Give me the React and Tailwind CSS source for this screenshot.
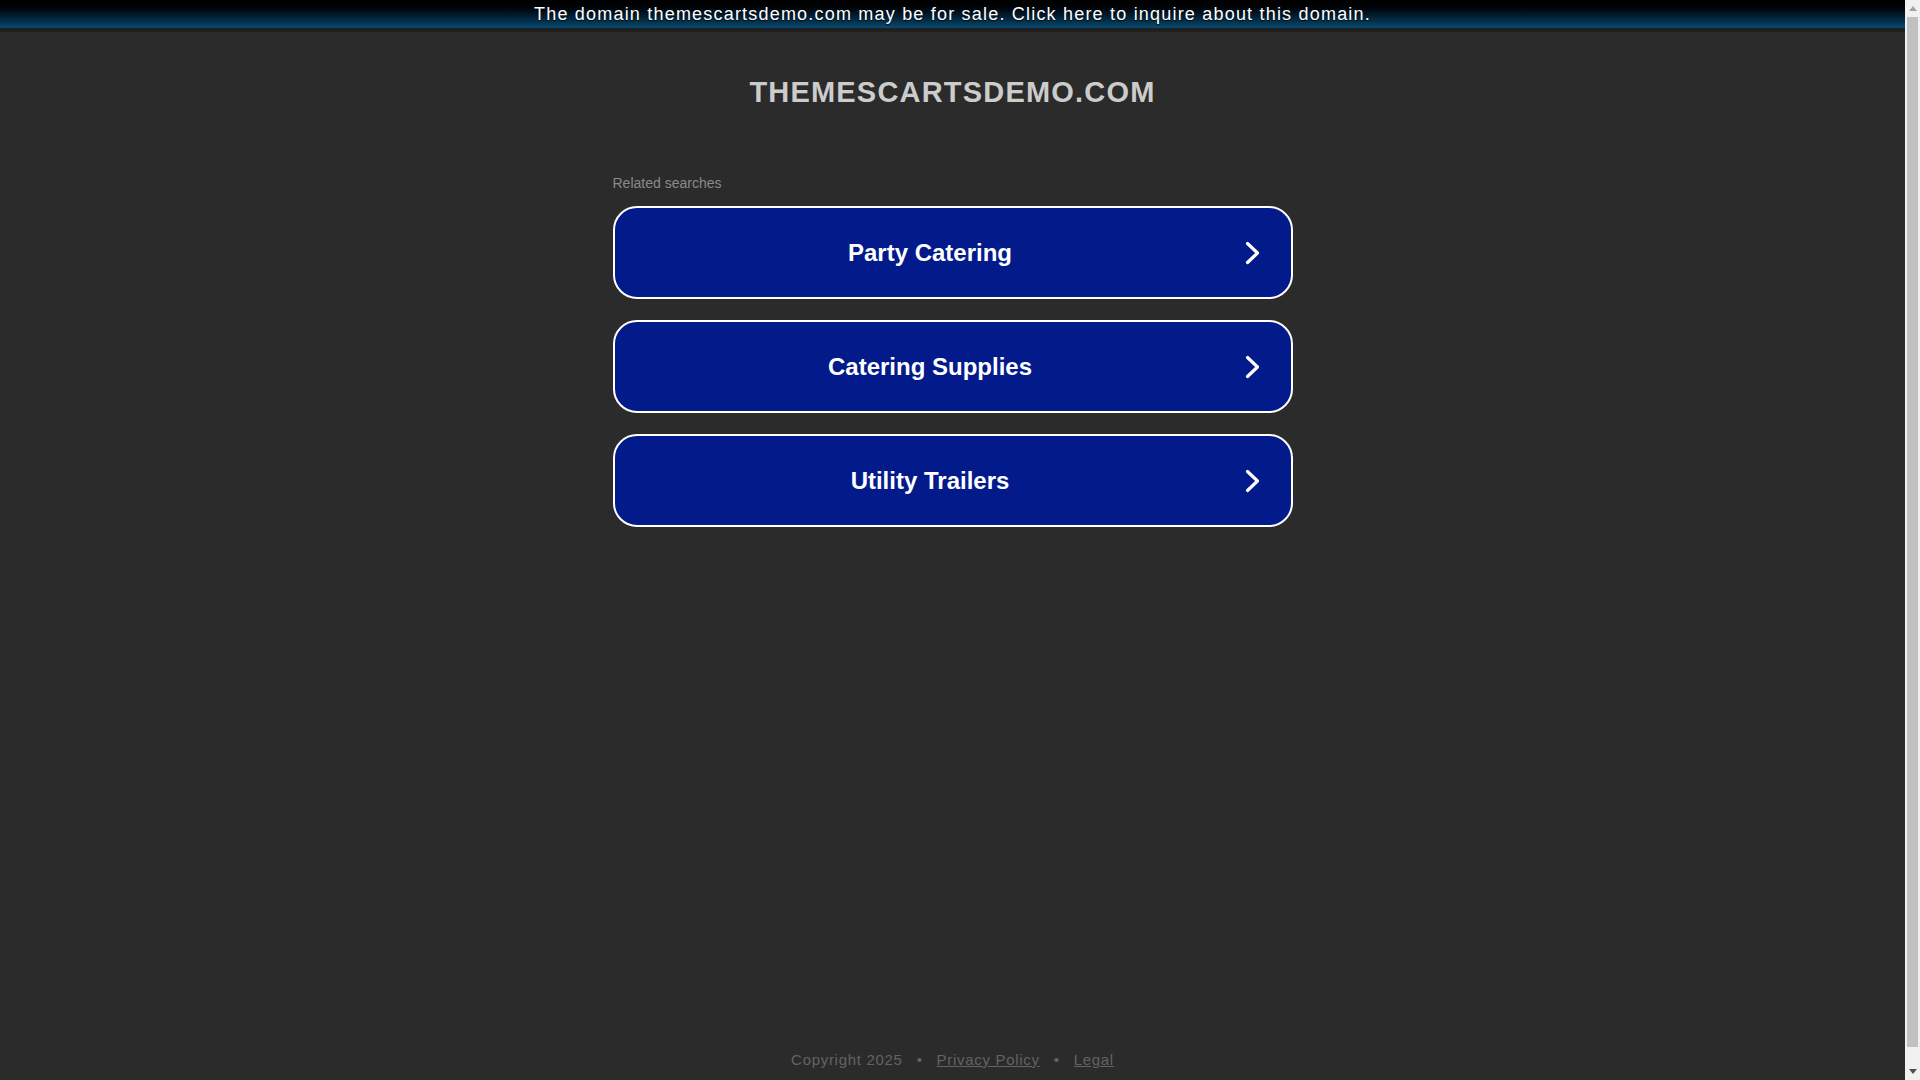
import React from 'react'

const searches = ['Party Catering', 'Catering Supplies', 'Utility Trailers']

function Chevron() {
  return (
    <svg width="16" height="24" viewBox="0 0 16 24" fill="none" className="block">
      <path d="M2.5 2.5 L12.5 12 L2.5 21.5" stroke="white" strokeWidth="3.2" strokeLinecap="round" strokeLinejoin="round" />
    </svg>
  )
}

function SearchButton({ label }) {
  return (
    <a
      href="#"
      className="flex items-center h-[93px] bg-[#021a8a] border-2 border-white rounded-[24px] text-white no-underline"
    >
      <span className="flex-1 text-center text-[24px] font-bold leading-none pl-[1px]">{label}</span>
      <span className="w-[46px] flex items-center">
        <Chevron />
      </span>
    </a>
  )
}

export default function App() {
  return (
    <div className="h-screen flex bg-[#2b2b2b]">
      <div
        className="flex-1 min-h-[1096px] flex flex-col"
        style={{ fontFamily: '"Liberation Sans", Arial, sans-serif' }}
      >
        <div className="h-[32px] bg-gradient-to-b from-[#000000] to-[#0a4a70] border-b-[4px] border-[#1f1f1f] flex items-center justify-center">
          <a href="#" className="text-[18px] tracking-[1.2px] text-white leading-none pb-[1px] [text-shadow:0_1px_1px_rgba(0,0,0,0.8)]">
            The domain themescartsdemo.com may be for sale. Click here to inquire about this domain.
          </a>
        </div>

        <div className="w-[680px] mx-auto flex flex-col">
          <h1 className="mt-[44px] text-center text-[29px] leading-[33px] font-bold tracking-[1.2px] text-[#cccccc]">
            THEMESCARTSDEMO.COM
          </h1>

          <p className="mt-[64px] text-[14px] leading-[20px] text-[#8a8a8a]">Related searches</p>

          <div className="mt-[13px] flex flex-col gap-[21px]">
            {searches.map((s) => (
              <SearchButton key={s} label={s} />
            ))}
          </div>
        </div>

        <footer className="mt-auto pb-[26px] flex items-center justify-center text-[15px] leading-[20px] tracking-[0.7px] text-[#636363]">
          <span>Copyright 2025</span>
          <span className="mx-[14px]">•</span>
          <a href="#" className="underline">Privacy Policy</a>
          <span className="mx-[14px]">•</span>
          <a href="#" className="underline">Legal</a>
        </footer>
      </div>

      {/* page scrollbar */}
      <div className="w-[15px] bg-[#f1f1f1] flex flex-col items-center">
        <div className="h-[17px] flex items-center justify-center">
          <div className="w-0 h-0 border-l-[4px] border-r-[4px] border-b-[5px] border-l-transparent border-r-transparent border-b-[#a3a3a3]" />
        </div>
        <div className="w-[11px] h-[1030px] bg-[#c1c1c1]" />
        <div className="flex-1 flex items-end justify-center pb-[6px]">
          <div className="w-0 h-0 border-l-[4px] border-r-[4px] border-t-[5px] border-l-transparent border-r-transparent border-t-[#505050]" />
        </div>
      </div>
    </div>
  )
}
